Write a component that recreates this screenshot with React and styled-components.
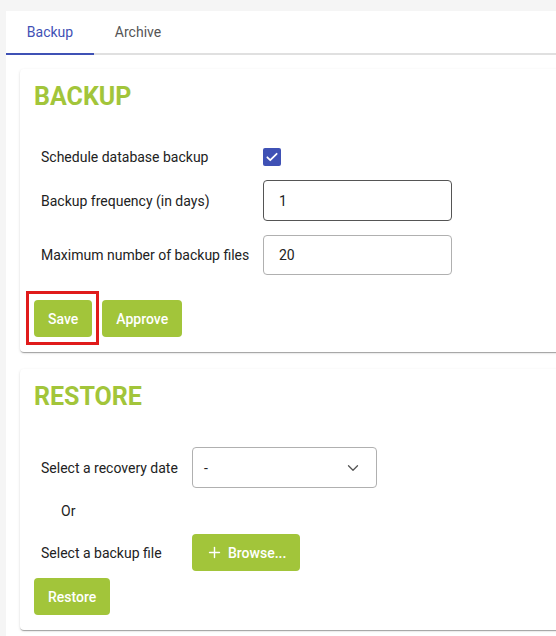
import styled, { createGlobalStyle } from 'styled-components';
import { ChevronDown, Plus } from 'lucide-react';

const GlobalStyle = createGlobalStyle`
  html, body {
    margin: 0;
    padding: 0;
    background: #f5f5f5;
    font-family: Roboto, "Liberation Sans", Arial, sans-serif;
    overflow: hidden;
  }
  * { box-sizing: border-box; }
`;

const Page = styled.div`
  padding: 11px 0 0 6px;
  width: 100vw;
  height: 100vh;
  overflow: hidden;
`;

const Panel = styled.div`
  background: #ffffff;
  width: 620px;
  min-height: 700px;
`;

const TabBar = styled.div`
  display: flex;
  height: 44px;
  border-bottom: 2px solid #e0e0e0;
`;

const Tab = styled.div`
  width: 88px;
  display: flex;
  align-items: center;
  justify-content: center;
  font-size: 14px;
  color: ${(p) => (p.$active ? '#3f51b5' : '#555')};
  border-bottom: 2px solid ${(p) => (p.$active ? '#3f51b5' : 'transparent')};
  margin-bottom: -2px;
`;

const Content = styled.div`
  display: flex;
  flex-direction: column;
  gap: 17px;
  padding: 14px 0 0 14px;
`;

const Card = styled.div`
  background: #fff;
  border-radius: 4px;
  padding: 13px 14px 15px;
  box-shadow: 0 2px 1px -1px rgba(0, 0, 0, 0.2), 0 1px 1px 0 rgba(0, 0, 0, 0.14),
    0 1px 3px 0 rgba(0, 0, 0, 0.12);
`;

const Title = styled.h2`
  margin: 0;
  font-size: 25px;
  line-height: 30px;
  font-weight: 700;
  color: #a2c53a;
`;

const Form = styled.div`
  display: grid;
  grid-template-columns: ${(p) => p.$labelWidth}px auto;
  justify-content: start;
  align-items: center;
  row-gap: ${(p) => p.$gap}px;
  padding-left: 7px;
  margin-top: ${(p) => p.$top}px;
`;

const Label = styled.div`
  font-size: 14px;
  color: #222;
  padding-left: ${(p) => p.$indent || 0}px;
`;

const CheckRow = styled.div`
  height: 19px;
  display: flex;
  align-items: center;
`;

const Checkbox = styled.span`
  width: 18px;
  height: 18px;
  border-radius: 2px;
  background: #3f51b5;
  display: inline-flex;
  align-items: center;
  justify-content: center;
`;

const Input = styled.div`
  width: 189px;
  height: ${(p) => p.$h}px;
  border: 1px solid ${(p) => (p.$focused ? '#555' : '#b0b0b0')};
  border-radius: 4px;
  padding-left: 15px;
  display: flex;
  align-items: center;
  font-size: 14px;
  color: #222;
`;

const Select = styled.div`
  width: 185px;
  height: 41px;
  border: 1px solid #b0b0b0;
  border-radius: 4px;
  padding: 0 14px 0 11px;
  display: flex;
  align-items: center;
  justify-content: space-between;
  font-size: 14px;
  color: #222;
`;

const OrRow = styled.div`
  grid-column: 1 / -1;
  height: 46px;
  display: flex;
  align-items: center;
`;

const Buttons = styled.div`
  display: flex;
  gap: 10px;
  margin-top: ${(p) => p.$top}px;
`;

const Button = styled.button`
  position: relative;
  height: 37px;
  padding: 0 14px;
  border: none;
  border-radius: 4px;
  background: #a2c53a;
  color: #fff;
  font-family: Roboto, "Liberation Sans", Arial, sans-serif;
  font-size: 14px;
  font-weight: 500;
  display: inline-flex;
  align-items: center;
  gap: 5px;
  cursor: pointer;
  justify-self: start;

  ${(p) =>
    p.$highlight &&
    `&::after {
      content: '';
      position: absolute;
      inset: -9px -7px -8px -8px;
      border: 3px solid #e01b1b;
    }`}
`;

export default function App() {
  return (
    <>
      <GlobalStyle />
      <Page>
        <Panel>
          <TabBar>
            <Tab $active>Backup</Tab>
            <Tab>Archive</Tab>
          </TabBar>
          <Content>
            <Card>
              <Title>BACKUP</Title>
              <Form $labelWidth={222} $gap={14} $top={35}>
                <Label>Schedule database backup</Label>
                <CheckRow>
                  <Checkbox>
                    <svg width="14" height="14" viewBox="0 0 24 24" fill="none" stroke="#fff" strokeWidth="3" strokeLinecap="round" strokeLinejoin="round">
                      <path d="M4 12.5l5 5L20 6.5" />
                    </svg>
                  </Checkbox>
                </CheckRow>
                <Label>Backup frequency (in days)</Label>
                <Input $h={41} $focused>1</Input>
                <Label>Maximum number of backup files</Label>
                <Input $h={40}>20</Input>
              </Form>
              <Buttons $top={25}>
                <Button $highlight>Save</Button>
                <Button>Approve</Button>
              </Buttons>
            </Card>
            <Card>
              <Title>RESTORE</Title>
              <Form $labelWidth={151} $gap={0} $top={35}>
                <Label>Select a recovery date</Label>
                <Select>
                  <span>-</span>
                  <ChevronDown size={18} color="#555" strokeWidth={1.75} />
                </Select>
                <OrRow>
                  <Label $indent={20}>Or</Label>
                </OrRow>
                <Label>Select a backup file</Label>
                <Button>
                  <Plus size={17} strokeWidth={2} />
                  Browse...
                </Button>
              </Form>
              <Buttons $top={7}>
                <Button>Restore</Button>
              </Buttons>
            </Card>
          </Content>
        </Panel>
      </Page>
    </>
  );
}
